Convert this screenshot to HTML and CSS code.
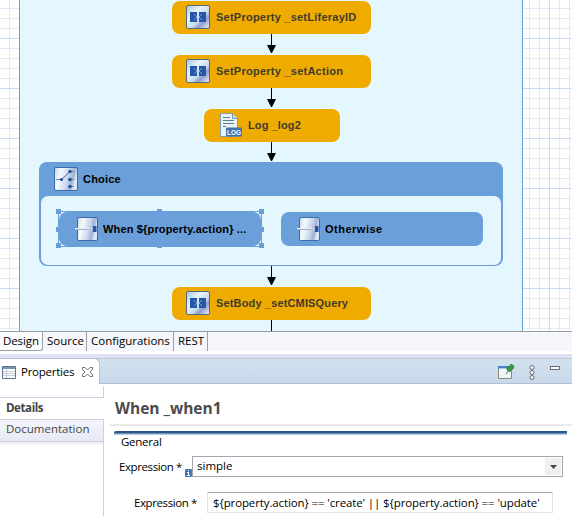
FILE: index.html
```html
<!DOCTYPE html>
<html lang="en">
<head>
<meta charset="utf-8">
<title>Flow editor</title>
<link rel="stylesheet" href="styles.css">
</head>
<body>
<svg class="defs" width="0" height="0" aria-hidden="true">
  <defs>
    <linearGradient id="metal" x1="0" y1="0" x2="1" y2="1">
      <stop offset="0" stop-color="#a9c3d8"/><stop offset=".35" stop-color="#eaf4f8"/><stop offset=".6" stop-color="#c9dbea"/><stop offset=".72" stop-color="#8f9dcc"/><stop offset="1" stop-color="#eef5fa"/>
    </linearGradient>
    <linearGradient id="metalH" x1="0" y1="0" x2="1" y2=".25">
      <stop offset="0" stop-color="#c5d5e8"/><stop offset=".3" stop-color="#f3fbfc"/><stop offset=".65" stop-color="#c9d6ec"/><stop offset=".85" stop-color="#9fb0d8"/><stop offset="1" stop-color="#dce8f5"/>
    </linearGradient>
    <symbol id="set" viewBox="0 0 24 24">
      <rect x=".5" y=".5" width="23" height="23" rx="1.5" fill="url(#metal)" stroke="#53697c"/>
      <path d="M4 7h7v10H4zM13 7h7v10h-7z" fill="#2456ab"/>
      <path d="M8 9l2.500 2.500M8 15l2.500-2.500M16 9l-2.500 2.500M16 15l-2.500-2.500" fill="none" stroke="#7fa3d8" stroke-width=".9"/>
      <path d="M10 12h4" stroke="#b5cce8"/>
    </symbol>
    <symbol id="choice" viewBox="0 0 24 24">
      <rect x=".5" y=".5" width="23" height="23" rx="1.500" fill="url(#metalH)" stroke="#3b6ba8"/>
      <path d="M2 12.500h6M16 4.500h4M14 12.500h6M14 19.500h6" fill="none" stroke="#6c8fbd"/>
      <g fill="#204f92"><circle cx="7.500" cy="12.500" r="1.600"/><circle cx="16" cy="4.500" r="1.700"/><circle cx="16" cy="12.500" r="1.700"/><circle cx="16" cy="19.500" r="1.700"/></g>
      <path d="M8 12l8-7.500" stroke="#3a66a3"/>
    </symbol>
    <symbol id="when" viewBox="0 0 24 24">
      <rect x="3.500" y=".5" width="20" height="23" rx="1.500" fill="url(#metalH)" stroke="#3b6ba8"/>
      <path d="M1 12h16" stroke="#a9b3c3" stroke-width="2"/><path d="M1 11.500h16" stroke="#e8edf2"/>
      <circle cx="17.500" cy="12" r="1.200" fill="#eee" stroke="#9aa8bd" stroke-width=".6"/>
      <rect x="19" y="9" width="3.500" height="6" fill="#2456ab"/>
    </symbol>
    <symbol id="log" viewBox="0 0 24 24">
      <path d="M1.500.5h12l5 5v18h-17z" fill="#e9f2f5" stroke="#7f9fb5"/>
      <path d="M13.500.5v5h5" fill="#cfdfe8" stroke="#6f95b3"/>
      <path d="M4 4.500h7M4 7.500h11M4 10.500h11M4 13.500h3" stroke="#5e7fa0"/>
      <rect x="7" y="14.500" width="16" height="9" rx="1" fill="#3f74ad"/>
      <text x="8" y="22" class="log-label" textLength="14" lengthAdjust="spacingAndGlyphs">LOG</text>
    </symbol>
  </defs>
</svg>
<div class="app">
  <main class="canvas">
    <div class="route">
      <div class="node orange n1"><svg class="icon"><use href="#set"/></svg><span class="t1">SetProperty _setLiferayID</span></div>
      <svg class="arrow a1" width="9" height="21"><path d="M4 0h1v13h-1z"/><path d="M0 11h9l-4 8h-1z"/></svg>
      <div class="node orange n2"><svg class="icon"><use href="#set"/></svg><span class="t2">SetProperty _setAction</span></div>
      <svg class="arrow a2" width="9" height="21"><path d="M4 0h1v13h-1z"/><path d="M0 11h9l-4 8h-1z"/></svg>
      <div class="node orange n3"><svg class="icon"><use href="#log"/></svg><span class="t3">Log _log2</span></div>
      <svg class="arrow a3" width="9" height="20"><path d="M4 0h1v13h-1z"/><path d="M0 11h9l-4 8h-1z"/></svg>
      <section class="choice">
        <header class="choice-head"><svg class="icon"><use href="#choice"/></svg><span class="t4">Choice</span></header>
        <div class="choice-body">
          <div class="node blue selected"><svg class="icon"><use href="#when"/></svg><span class="t5">When ${property.action} ...</span>
            <i class="frame"></i><i class="h nw"></i><i class="h nn"></i><i class="h ne"></i><i class="h ww"></i><i class="h ee"></i><i class="h sw"></i><i class="h ss"></i><i class="h se"></i></div>
          <div class="node blue"><svg class="icon"><use href="#when"/></svg><span class="t6">Otherwise</span></div>
        </div>
      </section>
      <svg class="arrow a4" width="9" height="21"><path d="M4 0h1v13h-1z"/><path d="M0 11h9l-4 8h-1z"/></svg>
      <div class="node orange n5"><svg class="icon"><use href="#set"/></svg><span class="t7">SetBody _setCMISQuery</span></div>
      <svg class="arrow a5" width="9" height="11"><path d="M4 0h1v11h-1z"/></svg>
    </div>
  </main>
  <nav class="tabs">
    <span class="tab active"><b class="u1">Design</b></span><span class="tab w2"><b class="u2">Source</b></span><span class="tab w3"><b class="u3">Configurations</b></span><span class="tab w4"><b class="u4">REST</b></span>
  </nav>
  <div class="viewbar">
    <div class="viewtab">
      <svg width="14" height="13"><path d="M.5.5h13v12H.5z" fill="#fff" stroke="#5c7699"/><path d="M1 1h12v2H1z" fill="#7893b8"/><path d="M1 5.500h12M1 7.500h12M1 9.500h12M4.500 3v9" stroke="#c6cfdb"/></svg>
      <span class="p1">Properties</span>
      <svg width="11" height="10"><path d="M.5.5h2.500l2.500 2.500L8 .5h2.500v2L8 5l2.500 2.500v2H8L5.500 7 3 9.500H.5v-2L3 5 .5 2.500z" fill="#fff" stroke="#707070"/></svg>
    </div>
    <div class="tools">
      <svg width="17" height="16"><path d="M.5 2.500h13v12H.5z" fill="#edf7fb" stroke="#8c8d70"/><path d="M0 2h14v3H0z" fill="#4a83c5"/><path d="M1 4.500h12" stroke="#a7cdf0"/><path d="M8 10l3-4" stroke="#667" stroke-width="1"/><path d="M9 4l2-1 2-3 3 2-1 3-2 1-1 2-3-2z" fill="#389b3d" stroke="#23702d" stroke-width=".6"/></svg>
      <svg class="dots" width="6" height="15"><g fill="#fff" stroke="#666"><circle cx="3" cy="2.500" r="2"/><circle cx="3" cy="7.500" r="2"/><circle cx="3" cy="12.500" r="2"/></g></svg>
      <svg class="min" width="10" height="4"><path d="M.5.5h9v3h-9z" fill="#fff" stroke="#666"/></svg>
    </div>
  </div>
  <div class="properties">
    <aside class="side">
      <div class="side-item details"><span class="s1">Details</span></div>
      <div class="side-item docs"><span class="s2">Documentation</span></div>
      <div class="side-rest"></div>
    </aside>
    <section class="form">
      <h1 class="title"><span class="f0">When _when1</span></h1>
      <div class="rule"></div>
      <div class="section-line"></div>
      <div class="section"><span class="f1">General</span></div>
      <div class="row r1"><label class="f2">Expression *</label>
        <svg class="info" width="7" height="8"><rect width="7" height="8" rx="1" fill="#3f77b0"/><path d="M3 1h1v1H3zM2 3h2v3h1v1H2V6h1V4H2z" fill="#fff"/></svg>
        <div class="combo"><span class="f3">simple</span><span class="drop"><svg width="7" height="4"><path d="M0 0h7L3.500 4z" fill="#444"/></svg></span></div></div>
      <div class="row r2"><label class="f4">Expression *</label><div class="input"><span class="f5">${property.action} == 'create' || ${property.action} == 'update'</span></div></div>
    </section>
  </div>
</div>
</body>
</html>
```

FILE: styles.css
```css
* { box-sizing: border-box; }
body { margin: 0; background: #fff; color: #000; font: 11.5px/16px "Open Sans", "Noto Sans", sans-serif; }
svg { display: block; flex: none; }
span, label { white-space: nowrap; }
.defs { position: absolute; }
.app { width: 572px; height: 516px; overflow: hidden; display: flex; flex-direction: column; }

.canvas {
  height: 331px; flex: none; padding-left: 19px; overflow: hidden;
  background-color: #fff;
  background-image:
    linear-gradient(90deg, #cbdcf0 1px, transparent 1px),
    linear-gradient(#cbdcf0 1px, transparent 1px),
    linear-gradient(90deg, #e1eaf7 1px, transparent 1px),
    linear-gradient(#e1eaf7 1px, transparent 1px);
  background-size: 50px 50px, 50px 50px, 10px 10px, 10px 10px;
  background-position: 49px 0, 0 38px, 9px 0, 0 8px;
}
.route {
  width: 504px; height: 331px; padding-top: 1px; background: #e4f7ff;
  border: solid #6b9fd9; border-width: 0 1px;
  display: flex; flex-direction: column; align-items: flex-start;
  font: bold 11px/14px "Liberation Sans", Arial, sans-serif;
}
.node { display: flex; align-items: center; border-radius: 8px; flex: none; }
.icon { width: 24px; height: 24px; margin-right: 6px; }
.log-label { font: bold 8px "Liberation Sans", sans-serif; fill: #fff; }
.orange { width: 199px; height: 33px; margin-left: 152px; padding: 0 0 1px 14px; background: #f0ab00; color: #403c2c; }
.n3 { width: 136px; margin-left: 184px; padding-left: 15px; }
.n3 .icon { margin-right: 5px; }
.arrow { margin-left: 247px; }
.t1 { letter-spacing: .24px; }
.t2 { letter-spacing: .25px; }
.t3 { letter-spacing: .1px; }
.t4 { letter-spacing: .2px; }
.t5 { letter-spacing: .16px; }
.t6 { letter-spacing: .5px; }
.t7 { letter-spacing: .15px; }

.choice { width: 464px; height: 104px; margin-left: 19px; padding: 0 2px 1px; background: #6b9fd9; border-radius: 8px; flex: none; }
.choice-head { height: 34px; padding-left: 13px; display: flex; align-items: center; }
.choice-head .icon { margin-right: 5px; }
.choice-body { height: 69px; padding: 16px 18px 0; background: #e4f7ff; border-radius: 7px; display: flex; gap: 20px; }
.blue { position: relative; width: 202px; height: 34px; padding-left: 15px; background: #6b9fd9; }
.blue .icon { margin-right: 5px; }
.frame { position: absolute; left: -1px; top: -1px; right: -1px; bottom: -1px; border: 1px solid #6b9fd9; }
.h { position: absolute; width: 5px; height: 5px; background: #6b9fd9; }
.nw, .nn, .ne { top: -3px; }
.sw, .ss, .se { bottom: -2px; }
.ww, .ee { top: 15px; }
.nw, .ww, .sw { left: -3px; }
.nn, .ss { left: 98px; }
.ne, .ee, .se { right: -3px; }

.tabs { height: 20px; flex: none; display: flex; background: #f5f6fb; border-top: 1px solid #9c9c9c; }
.tab { width: 44px; height: 19px; padding: 1px 0 0 4px; border-right: 1px solid #a0a0a0; }
.tab b { font-weight: 400; display: inline-block; }
.tab.active { width: 43px; padding-left: 3px; border-bottom: 1px solid #a0a0a0; border-bottom-right-radius: 3px; background: #fafbfe; }
.u1 { letter-spacing: -.1px; }
.w3 { width: 87px; }
.w4 { width: 34px; }

.viewbar {
  height: 33px; flex: none; border-top: 3px solid #fff; padding-top: 4px; display: flex;
  background: linear-gradient(#c3c4d0, #c3c4d0) 0 4px / 100% 1px no-repeat, linear-gradient(#b5bccf, #b5bccf) 0 100% / 100% 1px no-repeat, linear-gradient(#dee4f5 4px, #d2e1ef 5px, #c9d9eb);
}
.viewtab { width: 100px; height: 26px; background: #fff; border: solid #b9bfd0; border-width: 1px 1px 0 0; border-top-right-radius: 6px; display: flex; align-items: center; padding: 1px 0 0 2px; }
.viewtab span { width: 66px; padding-left: 5px; letter-spacing: -.25px; }
.tools { flex: 1; display: flex; padding: 6px 0 0 398px; }
.dots { margin: 1px 0 0 14px; }
.min { margin: 2px 0 0 15px; }

.properties { height: 132px; flex: none; display: flex; }
.side { width: 104px; padding-top: 2px; display: flex; flex-direction: column; color: #454545; }
.side::before { content: ""; height: 11px; flex: none; border: solid #cbd1e5; border-width: 0 1px 1px 0; }
.side-item { height: 21px; padding: 2px 0 0 6px; flex: none; }
.details { font-weight: 700; letter-spacing: -.4px; }
.docs { height: 23px; padding-top: 1px; border: 1px solid #cbd1e5; border-left: 0; background: linear-gradient(#f4f5fb, #e6e9f4); }
.side-rest { flex: 1; border-right: 1px solid #cbd1e5; background: linear-gradient(#e8e8ec, #fff 3px); }
.form { flex: 1; padding-left: 5px; }
.title { margin: 0; padding: 13px 0 0 6px; height: 40px; font-size: 15.5px; line-height: 22px; font-weight: 700; color: #4b4b4b; }
.rule { height: 2px; background: #ebebeb; }
.section-line { width: 453px; height: 4px; margin: 5px 0 0 5px; border-top: 2px solid #285785; border-bottom: 1px solid #b3cade; background: #7395b8; border-radius: 2px 0 0 0; }
.section { height: 22px; padding: 0 0 0 12px; margin-top: -1px; letter-spacing: -.25px; }
.row { display: flex; }
.r1 { height: 21px; }
.f2, .f4 { letter-spacing: -.4px; }
.f2 { width: 66px; margin: 3px 0 0 10px; }
.info { margin-top: 13px; }
.combo { width: 371px; height: 21px; border: 1px solid #a3a5b0; display: flex; justify-content: space-between; padding: 1px 1px 1px 4px; }
.drop { width: 16px; height: 17px; background: #efefef; display: flex; align-items: center; justify-content: center; }
.r2 { margin-top: 15px; }
.f4 { width: 73px; margin: 3px 0 0 25px; }
.input { width: 346px; height: 21px; border: 1px solid #dfe3ea; border-top-color: #a5a7b0; border-radius: 1px; padding: 2px 0 0 5px; letter-spacing: -.12px; }
```
